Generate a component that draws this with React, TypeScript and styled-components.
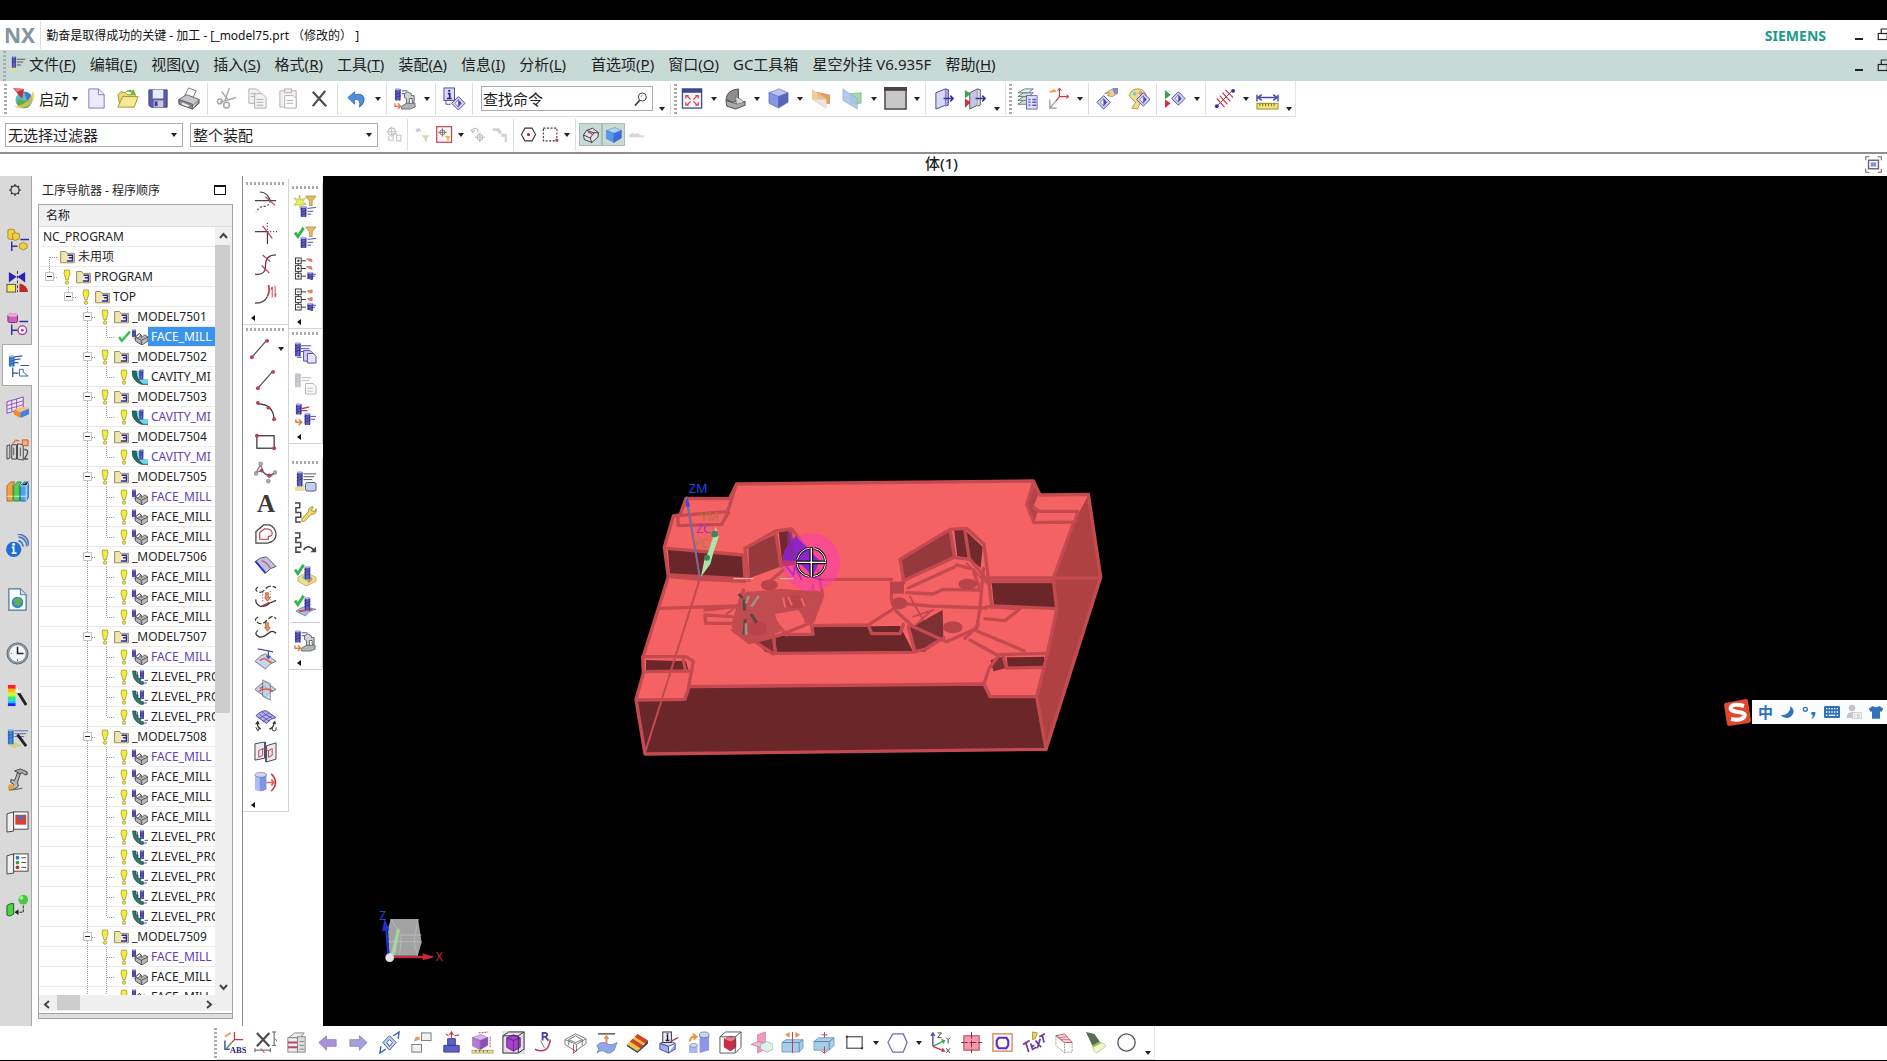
import React from "react";
import styled, { createGlobalStyle, css } from "styled-components";

const GlobalStyle = createGlobalStyle`
  * { box-sizing: border-box; }
  html, body, #root { height: 100%; }
  body {
    margin: 0;
    background: #000;
    color: #1e1e1e;
    font-family: "Noto Sans", "Noto Sans CJK SC", sans-serif;
    font-size: 12px;
    overflow: hidden;
  }
  button, input, select { font: inherit; color: inherit; margin: 0; }
  button { padding: 0; border: 0; background: none; cursor: default; }
`;

/* ---------- icon drawings, all on a 24 x 24 grid ---------- */

const P = "#4b48a8";
const R = "#c23a4c";

const Mill = ({ x = 0, y = 0, h = 12, c = "#6464c4", d = "#3a3690" }: { x?: number; y?: number; h?: number; c?: string; d?: string }) => (
  <g transform={`translate(${x} ${y})`}>
    <rect x="0" y="1" width="6" height={h} rx="1" fill={c} />
    <path d={`M0 4l6-2M0 7l6-2M0 10l6-2M1 1v${h}M5 1v${h}`} stroke={d} strokeWidth="1" fill="none" />
    <ellipse cx="3" cy="1.5" rx="3" ry="1.2" fill="#a9a9e6" />
  </g>
);
const Diamond = ({ x = 0, y = 0 }: { x?: number; y?: number }) => (
  <g transform={`translate(${x} ${y})`}>
    <path d="M7 0l7 7-7 7-7-7z" fill="#d5d5f2" stroke={P} />
    <path d="M7 3l3.5 4L7 11z" fill={P} />
    <path d="M7 3L3.500 7 7 11z" fill="#fff" stroke={P} strokeWidth=".7" />
  </g>
);
const Cube = ({ a = "#b6c4f6", b = "#8496e4", c = "#5566b8" }) => (
  <g stroke="#5a66a8" strokeWidth=".6">
    <path d="M2 6l11-4 9 4-10 4z" fill={a} />
    <path d="M2 6l10 4v12l-10-5z" fill={b} />
    <path d="M22 6l-10 4v12l10-6z" fill={c} />
  </g>
);
const Boxes = ({ sign }: { sign: "+" | "-" }) => (
  <>
    {[1, 9, 17].map((y) => (
      <g key={y} fill="none" stroke="#333">
        <rect x="1.500" y={y} width="6" height="6" fill="#fff" />
        <path d={`M3 ${y + 3}h3${sign === "+" ? `M4.500 ${y + 1.5}v3` : ""}M7.500 ${y + 3}h5`} />
        {y < 17 && <path d={`M4.500 ${y + 6}v2`} />}
      </g>
    ))}
    <path d={sign === "+" ? "M13 2l5 0 1 3-3-1zM13 10l5 0 1 3-3-1z" : "M19 2l-5 1 2 2 3 0zM19 10l-5 1 2 2 3 0z"} fill="#e89070" stroke="#b5502e" strokeWidth=".6" />
    <Mill x={14} y={15} h={7} />
    <path d="M20 18h3M20 20h2" stroke={P} />
  </>
);
const Surface = ({ y = 0 }) => (
  <g transform={`translate(0 ${y})`}>
    <path d="M1 12Q7 5 12 4l11 8q-6 1-11 8z" fill="#c9d2f0" stroke="#55606e" strokeWidth=".8" />
    <path d="M6 11q3-2 5-2l8 5" fill="none" stroke="#e0664e" strokeWidth="1.800" />
  </g>
);
const Check = () => <path d="M1 7l3 4 6-9" fill="none" stroke="#31b54a" strokeWidth="3" />;

const icons: Record<string, React.ReactNode> = {
  start: (<>
    <circle cx="13" cy="13" r="8.500" fill="#58b8d6" /><path d="M6 17q4 6 12 3l-3-6-8-2z" fill="#55b04a" /><path d="M13 5q9 0 8 9l-4 4-2-8z" fill="#3779c8" />
    <path d="M3 19Q17 19 22 4q4 9-5 15-9 4-14 0z" fill="#eac545" opacity=".8" /><path d="M2 1l11 1-2 10z" fill="#c72e36" /><path d="M2 1l11 1-7 3z" fill="#ed7b7b" />
  </>),
  menuMill: (<><path d="M1 22l5-6 6 2-3 5z" fill="#dfe08a" /><Mill x={4} y={1} h={16} /><path d="M11 6h12M11 10h9M11 14h6" stroke="#555" strokeWidth="1.500" /></>),
  newDoc: <path d="M4 2h10l6 6v14H4z M14 2v6h6" fill="#ecebfa" stroke="#7d79c4" />,
  open: (<><path d="M2 8l3-3 5 1 2 2h8v3L4 20z" fill="#e9d873" stroke="#a59430" /><path d="M2 21l5-11h16l-4 11z" fill="#f4ea96" stroke="#a59430" /><path d="M9 6q4-5 8-2l1-2 3 6-6 0 1-2q-3-2-7 0z" fill="#70b843" /></>),
  save: (<><path d="M2 3h19v18H4l-2-2z" fill="#5c5cab" stroke="#3f3f85" /><rect x="6" y="3" width="11" height="9" fill="#e6eef5" /><rect x="7" y="14" width="10" height="7" fill="#c8c8d8" /><rect x="8" y="15" width="3" height="5" fill="#3f3f85" /></>),
  print: (<><path d="M7 9l4-8 8 3-4 8z" fill="#fff" stroke="#777" /><path d="M1 13l8-5 13 5-7 7-14-4z" fill="#c8c8cc" stroke="#666" /><path d="M1 13v5l14 5v-5zM15 23l7-6v-4" fill="#8c8c94" stroke="#555" /><path d="M4 17l7 3" stroke="#eee" strokeWidth="2" /></>),
  cut: (<g fill="none" stroke="#a9a9a9" strokeWidth="1.500"><path d="M10 15L15 1M14 14L7 5M5 16l17-5" /><circle cx="5" cy="15" r="2.500" /><circle cx="12" cy="19" r="3" /></g>),
  copy: (<g fill="#f2f2f2" stroke="#b0b0b0"><path d="M3 2h8l4 4v11H3z" /><path d="M9 7h8l4 4v11H9z" /><path d="M5 7h5M5 10h4M11 13h7M11 16h7M11 19h7" /></g>),
  paste: (<g fill="#f0f0f0" stroke="#b0b0b0"><path d="M3 4h17v17H3z" /><path d="M8 2h7v4H8z" /><path d="M8 9h9l3 3v10H8z" fill="#fff" /><path d="M10 14h7M10 17h7" /></g>),
  del: <path d="M5 5l14 15M18 4L5 20" stroke="#4c4c4c" strokeWidth="2.300" fill="none" />,
  undo: (<path d="M3 11l7-6v3q10-2 10 5 0 5-5 8 2-9-5-8v5z" fill="#4d8bdc" stroke="#2c5fb0" strokeWidth=".8" />),
  post: (<>
    <Mill x={1} y={1} h={12} /><path d="M8 4h6M8 7h4" stroke={P} />
    <path d="M11 11V7l3-2 4 2v2h3v7h-2v-4h-3v7h-3v-7z" fill="#d2d5d8" stroke="#555" strokeWidth=".9" />
    <path d="M8 20l5-3h9v4l-5 2H8z" fill="#aeb4b8" stroke="#555" strokeWidth=".8" />
    <path d="M1 17v3h6M4 17l3 3-3 3" fill="none" stroke="#dd8352" strokeWidth="1.500" />
  </>),
  infoObj: (<><rect x="1" y="1" width="11" height="13" fill="#dcdcf4" stroke={P} /><path d="M5 7h2v5M4 12h5" stroke="#29267c" strokeWidth="1.800" fill="none" /><rect x="5.500" y="3" width="2" height="2" fill="#29267c" /><path d="M3 14v4h5" fill="none" stroke="#555" /><Diamond x={9} y={10} /></>),
  fit: (<><rect x="1.500" y="2" width="20" height="20" fill="#f3f3fb" stroke="#45528e" strokeWidth="1.400" /><rect x="1" y="2" width="21" height="4" fill="#39498a" /><path d="M6 9l4 4M17 9l-4 4M6 19l4-4M17 19l-4-4" stroke="#cf4b45" strokeWidth="1.300" /><path d="M5 12V9h3M18 12V9h-3M5 16v3h3M18 16v3h-3" fill="none" stroke="#cf4b45" strokeWidth="1.300" /></>),
  orient: (<><path d="M2 13Q3 3 15 2v12l-6 2z" fill="#8d8d8d" stroke="#4b4b4b" /><path d="M2 14l9 3 11-2v4l-10 4-9-3z" fill="#a9a9a9" stroke="#4b4b4b" /><path d="M12 10l6 3 3 3-8 2z" fill="#d6d6d6" stroke="#555" strokeWidth=".6" /></>),
  cube: <Cube />,
  clipEdit: (<><path d="M7 5l14 3v10l-13-2z" fill="#dd9e5b" /><path d="M2 2l15 10v11L2 13z" fill="#edc695" opacity=".85" /><path d="M4 13l13 10V13" fill="#e9e4de" /></>),
  clipPlane: (<><path d="M9 7l12-1v11H10z" fill="#a3dba9" stroke="#6da06f" strokeWidth=".6" /><path d="M2 2l15 10v11L2 14z" fill="#a9c6e8" stroke="#8793b5" strokeWidth=".6" opacity=".9" /></>),
  bg: (<><rect x="1" y="1" width="22" height="22" fill="#c8c8c8" stroke="#444" strokeWidth="1.500" /><rect width="24" height="4" fill="#444" /></>),
  section: (<><path d="M3 6l10-4v17L3 23z" fill="#d8d8f3" stroke={P} /><path d="M13 2l3 1v16l-3 1" fill="#aaa9da" stroke={P} /><path d="M11 12h10M18 9l3 3-3 3" fill="none" stroke="#33309c" strokeWidth="1.600" /></>),
  section2: (<><path d="M1 3l6 4-6 5z" fill="#3da34b" /><path d="M1 12l6 4-6 6z" fill="#cc3448" /><path d="M6 6l8-4v17l-8 4z" fill="#c6c6e4" stroke="#555" /><path d="M14 2l3 1v16l-3 1" fill="#e3e3ef" stroke="#555" /><path d="M12 12h10M19 9l3 3-3 3" fill="none" stroke="#33309c" strokeWidth="1.600" /></>),
  layers: (<g stroke="#55716d" strokeWidth=".9"><path d="M2 18l6-4 10 0-5 4z" fill="#d5e4e2" /><path d="M2 14l6-4h10l-5 4z" fill="#d5e4e2" /><path d="M2 10l6-4h10l-5 4z" fill="#d5e4e2" /><path d="M2 6l7-4h9l-5 4z" fill="#e9f1f0" /><rect x="11" y="9" width="11" height="14" fill="#dfdff8" stroke="#5f5cb4" /><path d="M13 13h2M17 13h4M13 16h2M17 16h4M13 19h2M17 19h4" stroke="#5f5cb4" strokeWidth="1.500" /></g>),
  wcs: (<g fill="none"><path d="M13 2v8h9M13 10l-4 5" stroke={R} strokeWidth="1.300" /><path d="M20 8l3 2-3 2M11 4l2-3 2 3" stroke={R} /><path d="M2 5l6-3 2 3-7 1z" fill="#e79a60" /><path d="M3 13v9h7M3 22l6-7" stroke="#999" strokeWidth="1.300" /></g>),
  showHide: (<><Diamond x={1} y={9} /><path d="M9 7l6-4 5-1 2 5-5 3-5-1 2-3z" fill="#f3cd97" stroke="#8e7545" strokeWidth=".7" /><path d="M17 1l6 0v6h-4z" fill="#7f8cc8" /></>),
  palette: (<><path d="M2 9Q5 1 13 2q8 2 7 10l-6 4-3 7-6-1 4-6z" fill="#f0df87" stroke="#9a8440" strokeWidth=".8" /><circle cx="8" cy="7" r="2" fill="#82c6dd" /><circle cx="14" cy="6" r="2" fill="#d99" /><Diamond x={10} y={6} /></>),
  replay: (<><path d="M1 3l6 5-6 5z" fill="#3da34b" /><path d="M1 13l6 4-6 5z" fill="#cc3448" /><Diamond x={8} y={5} /></>),
  measure: (<g fill="none"><path d="M4 20L20 4" stroke="#555" /><path d="M4 12l8 9M7 9l8 9M10 6l8 9M13 3l8 8" stroke={R} strokeWidth="1.200" /><circle cx="4" cy="20" r="2" fill="#33309c" /><circle cx="21" cy="4" r="2" fill="#33309c" /></g>),
  ruler: (<><path d="M1 8v7M23 8v7M2 11h20M6 8l-4 3 4 3M18 8l4 3-4 3" fill="none" stroke={P} strokeWidth="1.500" /><rect x="1" y="17" width="22" height="6" fill="#efe57a" stroke="#978b31" /><path d="M4 17v3M7 17v3M10 17v3M13 17v3M16 17v3M19 17v3" stroke="#756a1f" /></>),
  search: (<g fill="none" stroke="#444" strokeWidth="1.500"><circle cx="14" cy="9" r="6" /><path d="M10 14l-7 8" strokeWidth="2.500" /><path d="M12 9l2-3" strokeWidth="1" /></g>),
  /* selection bar */
  f1: (<g fill="none" stroke="#c3c3c3" strokeWidth="1.500"><circle cx="8" cy="8" r="5" /><path d="M8 1v14M1 8h14M4 14v6h6v-9h5v11M15 13h6v8h-6" /></g>),
  f2: (<g fill="#ccc"><path d="M2 4l6-1 3 5-3-1-4 2z" /><path d="M11 13h11l-4 5v4h-3v-4z" fill="#d9d6b0" /></g>),
  f3: (<><rect x="1" y="1" width="21" height="22" fill="#fdf4f4" stroke={R} strokeWidth="1.600" /><circle cx="9" cy="9" r="3.500" fill="none" stroke="#555" /><path d="M9 3v12M3 9h12" stroke="#555" /><path d="M12 14h9l-3 4v4h-2v-4z" fill="#e9bf45" /></>),
  f4: (<g fill="none" stroke="#bbb" strokeWidth="1.500"><circle cx="14" cy="16" r="4" /><path d="M14 9v14M7 16h14M3 6q3-5 8-1v4M1 5l3 4 3-3" /></g>),
  f5: (<g fill="#d2d2d2"><path d="M1 3h9l4 5-3 4-4-5-6 0z" /><path d="M13 11h8v12h-3v-8h-5z" /></g>),
  hexDot: (<g fill="none" stroke="#333" strokeWidth="1.500"><path d="M7 3h10l5 9-5 9H7l-5-9z" /><circle cx="12" cy="12" r="1.500" fill="#b22" stroke="#b22" /></g>),
  marquee: (<><rect x="2" y="3" width="19" height="18" fill="none" stroke="#444" strokeWidth="1.600" strokeDasharray="3 2" /><path d="M19 18h4v4h-4z" fill={R} /></>),
  shadeA: (<g stroke="#333" strokeWidth="1.200"><path d="M2 12l4-6 8-3 8 6-1 6-8 7-10-4z" fill="#e3e3ea" /><path d="M2 12l9 4 2 6M11 16l5-7 6 0M6 6l10 3" fill="none" /><path d="M8 8l6 3" stroke={R} strokeWidth="1.600" /></g>),
  shadeB: <Cube a="#a9d3fb" b="#4e9bf0" c="#386fd8" />,
  shadeC: <path d="M2 12l5-3 2 3 5-2 3 3 5 0v3H2z" fill="#d7d7d7" />,
  /* curve column */
  trim: (<g fill="none" stroke="#444" strokeWidth="1.200"><path d="M1 10h22M6 1q8 0 11 9" /><path d="M17 10q-1 6-7 6-4 0-8 6" strokeDasharray="2 2" /><path d="M12 6l10 9" stroke={R} /></g>),
  corner: (<g fill="none" stroke="#444" strokeWidth="1.300"><path d="M1 10h13v13" /><path d="M14 1v9h10" strokeDasharray="1 2" /><path d="M9 4l10 13" stroke={R} /></g>),
  bridge: (<g fill="none" stroke="#444" strokeWidth="1.300"><path d="M1 22q11 2 11-9 0-11 11-11" /><path d="M9 2l8 7M8 13l8 8" stroke={R} /></g>),
  extend: (<g fill="none" strokeWidth="1.300"><path d="M1 20q10 0 13-7" stroke="#444" /><path d="M14 13q3-6 1-12" stroke={R} strokeWidth="1.800" /><path d="M19 14V3M19 3l-1 3M22 2v11M22 14l1-4" stroke={R} strokeWidth="1" /></g>),
  line: (<><path d="M5 20L19 4" stroke="#555" strokeWidth="1.300" /><circle cx="4" cy="21" r="2" fill={R} /><circle cx="20" cy="4" r="2" fill={R} /></>),
  arc: (<><path d="M4 5q16 0 17 16" fill="none" stroke="#333" strokeWidth="1.300" /><g fill={R}><circle cx="4" cy="4" r="2" /><circle cx="15" cy="9" r="2" /><circle cx="21" cy="21" r="2" /></g></>),
  rect: (<><rect x="3" y="6" width="18" height="13" fill="none" stroke="#333" strokeWidth="1.300" /><circle cx="3" cy="6" r="2" fill={R} /><circle cx="21" cy="19" r="2" fill={R} /></>),
  spline: (<><path d="M2 13L7 3l2 8 7 6 6-5" fill="none" stroke="#888" strokeWidth="1.600" /><path d="M2 13q6-5 8-1t12 1" fill="none" stroke="#444" /><g fill="#aaa" stroke="#777" strokeWidth=".6"><circle cx="7" cy="3" r="2" /><circle cx="2" cy="13" r="2" /><circle cx="22" cy="12" r="2" /><circle cx="15" cy="21" r="2" /></g><g fill={R}><circle cx="8" cy="10" r="2" /><circle cx="16" cy="15" r="2" /></g></>),
  offset: (<g fill="none"><path d="M2 21V9l8-7h6q7 3 7 10t-9 9z" stroke="#444" strokeWidth="1.300" /><path d="M6 17v-7l5-4q8 0 8 5 0 3-4 3v3z" stroke={R} strokeWidth="1.200" /></g>),
  surfCurve: (<><path d="M1 8q6-5 12-5l10 10q-6 1-11 7z" fill="#b9c4ee" stroke="#555" /><path d="M2 8l10 12" stroke="#3333c5" strokeWidth="2" /><path d="M8 7q5 1 9 8" fill="none" stroke="#e05a50" strokeWidth="1.500" /></>),
  project: (<g fill="none" stroke="#333" strokeWidth="1.300"><path d="M4 2q-4 3 0 5t8-3 11-1" strokeDasharray="6 2" /><path d="M9 7v10M17 6v10" stroke="#b23ab2" strokeDasharray="1 2" /><path d="M12 8h3v5h2l-3 4-3-4h1z" fill="#ee9060" stroke="#b45020" strokeWidth=".7" /><path d="M2 15q-1 4 4 7 6 1 10-3l7-3" /><path d="M8 22l8-4" stroke={R} /></g>),
  combine: (<g fill="none" stroke="#333" strokeWidth="1.300"><path d="M4 1q-5 3 0 6t10-3 9-1" strokeDasharray="5 2" /><path d="M12 7h3v5h2l-3 4-3-4h1z" fill="#ee9060" stroke="#b45020" strokeWidth=".7" /><path d="M4 15q-5 4 2 7 5 0 9-4t8 0" /></g>),
  surfLine: (<><Surface y={3} /><path d="M4 2l16 3M15 4v8M13 9l2 3 2-3" stroke="#4052b0" fill="none" strokeWidth="1.300" /></>),
  surfInt: (<><Surface y={0} /><path d="M9 2l8 4v17l-8-4z" fill="#bfd3e6" stroke="#53617a" opacity=".7" /><path d="M5 14q6-5 15 0" fill="none" stroke="#e05a50" strokeWidth="1.500" /></>),
  uv: (<><path d="M2 7q6-6 11-5l10 7q-5 0-10 6z" fill="#b6b0ee" stroke={P} /><path d="M5 5l11 8M8 3l11 7M5 10l11-6M9 13l10-6" stroke={P} strokeWidth=".8" /><path d="M7 21q-4-2-3-7M16 21q4-1 5-6" fill="none" stroke="#333" strokeWidth="1.300" /><path d="M1 16l3-4 2 4zM19 15l3-3 1 4z" fill="#333" /><path d="M2 19l2 4 2-4M19 19v3q2 2 4 0v-3" fill="none" stroke="#333" /></>),
  mirror: (<g fill="#ececf0" stroke="#444"><path d="M1 4l10-2v17L1 21z" /><path d="M13 6l10-3v17l-10 3z" /><g fill="none" stroke={R}><path d="M5 11l4-2v7l-4 2zM9 9l3 1M15 11l4-2v7l-4 2zM12 10l3 1" /></g><path d="M12 2v21" stroke={P} /></g>),
  extrude: (<><path d="M1 4h12v15q-6 4-12 0z" fill="#7f94e6" /><path d="M1 4h5v17q-4-1-5-2z" fill="#aebcf5" /><ellipse cx="7" cy="4" rx="6" ry="2.500" fill="#cdd6fa" stroke="#667" strokeWidth=".6" /><path d="M13 12h8M18 9l3 3-3 3" fill="none" stroke="#e0664e" strokeWidth="1.800" /><path d="M18 3q9 9 0 18" fill="none" stroke={R} strokeWidth="1.600" /></>),
  /* machining column */
  createProg: (<><path d="M6 0l1 5 5-2-3 4 4 3-5 0-1 5-2-5-5 1 3-4-3-4 5 2z" fill="#e6ef58" stroke="#a0a83a" strokeWidth=".6" /><path d="M12 1h11l-4 5v5h-3V6z" fill="#e3bb5b" stroke="#9b7828" strokeWidth=".6" /><Mill x={7} y={11} h={11} /><path d="M14 14l9-1M14 17l6 0M14 20h4" stroke={P} /></>),
  verifyProg: (<><Check /><path d="M12 1h11l-4 5v5h-3V6z" fill="#e3bb5b" stroke="#9b7828" strokeWidth=".6" /><Mill x={7} y={11} h={11} /><path d="M14 14l9-1M14 17l6 0M14 20h4" stroke={P} /></>),
  expandAll: <Boxes sign="+" />,
  collapseAll: <Boxes sign="-" />,
  opCopy: (<><Mill x={1} y={1} h={14} /><path d="M7 5h11M7 8h9M7 11h5M3 17l5 0" stroke={P} /><path d="M10 10h7l3 3v8h-10z" fill="#d3d3f3" stroke={P} /><path d="M14 13h6l3 3v7h-9z" fill="#e6e6fb" stroke={P} /></>),
  opPaste: (<g opacity=".7"><Mill x={1} y={1} h={14} c="#c2c2c2" d="#9b9b9b" /><path d="M8 6h10M8 9h8" stroke="#999" /><path d="M12 12h8l3 3v8H12z" fill="#f7f7f7" stroke="#999" /><path d="M14 17h6M14 20h6" stroke="#aaa" /></g>),
  opMove: (<><Mill x={2} y={0} h={11} /><path d="M8 6l8-2M8 8l6 0" stroke={R} strokeWidth="1.400" /><Mill x={11} y={10} h={12} /><path d="M17 14h6M17 17h5" stroke={P} /><path d="M2 17v3h6M5 17l3 3-3 3" fill="none" stroke="#dd7a45" strokeWidth="1.500" /></>),
  opShow: (<><path d="M1 18l5-3h5v7H1z" fill="#e8dfa0" /><Mill x={3} y={1} h={15} /><path d="M10 4h13M10 7h11M10 10h9" stroke="#555" /><rect x="12" y="13" width="11" height="9" rx="2" fill="#bed0ee" stroke="#4b5c79" /></>),
  genPath: (<><path d="M1 2h5v5H2v5h5v5H2v5h5" fill="none" stroke="#444" strokeWidth="1.500" /><path d="M8 19l7-8q0-5 5-5l-2 4 4 1 1-3q1 6-5 6l-7 7q-4 1-3-2z" fill="#f0da6c" stroke="#8e7c26" strokeWidth=".8" /></>),
  replayPath: (<g fill="none" stroke="#444" strokeWidth="1.600"><path d="M1 1h5v5H2v5h5v5H2v5h5" /><path d="M10 19q4-7 11 0" /><path d="M23 15v6h-6z" fill="#444" stroke="none" /></g>),
  verify3d: (<><Check /><path d="M4 15l9-5 10 5v4l-10 5-9-5z" fill="#eddf8d" stroke="#a18f3a" strokeWidth=".6" /><path d="M8 15l5-3 6 3-5 4z" fill="#66c69c" /><path d="M14 19l5-4v3l-4 3z" fill="#eb7c60" /><Mill x={11} y={3} h={13} /></>),
  verifyCut: (<><Check /><path d="M2 18q7-6 12-4l9 2q-7 1-11 7z" fill="#a8baf0" stroke="#556aa0" strokeWidth=".7" /><path d="M5 18l14-2" stroke="#dd4a3c" strokeWidth="2" /><Mill x={11} y={3} h={13} /></>),
  /* resource bar */
  gear: (<g fill="none" stroke="#333" strokeWidth="1.600"><circle cx="12" cy="12" r="5.500" /><path d="M12 4v3M12 17v3M4 12h3M17 12h3M6.500 6.500l2 2M15.500 15.500l2 2M6.500 17.500l2-2M15.500 8.500l2-2" /></g>),
  asm: (<><g fill="#f1cf45" stroke="#9e7b13" strokeWidth=".8"><path d="M2 2l3-1 4 1v9l-4 1-3-1z" /><path d="M7 6l3-1 4 1v5l-4 2-3-1z" /><path d="M14 17l4-2 4 2v4l-4 2-4-2z" /></g><path d="M15 12h9M6 14v10M6 19h6" stroke="#35309a" strokeWidth="1.500" /></>),
  constraint: (<><path d="M3 2l8 5-8 6zM20 2l-8 5 8 6z" fill="#2a1fc0" /><path d="M12 1v22" stroke="#333" strokeDasharray="3 2" /><rect x="1" y="15" width="9" height="8" fill="#f7ea49" stroke="#555" /><path d="M14 14q8 1 9 9h-9z" fill="#c02828" /></>),
  part: (<><rect x="2" y="2" width="10" height="9" rx="2" fill="#ca62b8" stroke="#7d2673" /><ellipse cx="7" cy="3" rx="5" ry="2" fill="#eaa8df" /><path d="M14 10h9M6 13v11M6 19h6" stroke="#35309a" strokeWidth="1.500" /><circle cx="17" cy="19" r="4.500" fill="#fff" stroke="#ad3d9c" strokeWidth="1.500" /><circle cx="17" cy="19" r="1.500" fill="#ad3d9c" /></>),
  opNav: (<><Mill x={2} y={1} h={11} c="#4a8fe0" d="#2361b4" /><path d="M8 3l8-1M8 6l6-1M8 9h4M14 12h9M6 14v10M6 20h6" stroke="#35529a" strokeWidth="1.300" /><path d="M13 16h4v3l5 4h-9z" fill="#fff" stroke="#3c66ab" /></>),
  mfg: (<><path d="M1 6l17-5v12L1 18z" fill="#efe7f4" stroke="#7d4cc0" /><path d="M1 10l17-5M1 14l17-5M6 4v12M11 3v12" stroke="#8c5acb" /><path d="M8 14l9-3 7 2-9 4z" fill="#f7bd7c" /><path d="M8 14v5l7 4v-6z" fill="#f08a2a" /><path d="M15 17l9-4v6l-9 4z" fill="#4a7de0" /></>),
  machine: (<><path d="M1 8l3-1v14l-3 1zM6 7h5v15H6zM12 6l6 1v16l-6-1z" fill="#d5d5d5" stroke="#444" /><path d="M8 10v8M15 10v9" stroke="#555" /><path d="M7 6l3-4 4 1M17 2h6v6h-6z" fill="#f3b07c" stroke="#d6501d" /><path d="M19 12q5 0 3 5l-3 5h4" fill="none" stroke="#555" strokeWidth="1.500" /></>),
  books: (<g strokeWidth=".8"><path d="M1 6l4-4h4l-2 4v16H1z" fill="#f4a13f" stroke="#a8551c" /><path d="M8 6l4-4h4l-2 4v16H8z" fill="#4fd057" stroke="#1d7d28" /><path d="M15 6l4-4h5v15l-3 5h-6z" fill="#49a3e4" stroke="#1a5a92" /><path d="M21 6v16M15 6h6l3-4M1 17h6M8 17h6M15 17h6" stroke="#fff" /></g>),
  info: (<><circle cx="8" cy="16" r="8" fill="#1d70d4" /><circle cx="8" cy="11" r="1.500" fill="#fff" /><path d="M6 14h2v6M6 20h5" stroke="#fff" strokeWidth="1.800" fill="none" /><path d="M13 7q4 1 5 6M13 3q8 1 9 10M12 0q11 1 12 12" fill="none" stroke="#4c7dc4" strokeWidth="1.800" /></>),
  page: (<><path d="M3 1h12l6 6v16H3z" fill="#fff" stroke="#4477a8" strokeWidth="1.300" /><path d="M15 1v6h6" fill="#cfe0ef" stroke="#4477a8" /><circle cx="12" cy="15" r="6" fill="#3e86bf" /><path d="M8 12l5-2 4 4-4 5-4-2z" fill="#57b356" /></>),
  clock: (<><circle cx="12" cy="12" r="11" fill="#8d99a5" stroke="#5b6670" /><circle cx="12" cy="12" r="8.500" fill="#f5f8fb" /><path d="M12 5v7h6" fill="none" stroke="#222" strokeWidth="1.600" /><path d="M5 12h1M12 18v2M18 12h1" stroke="#666" /></>),
  spectrum: (<><rect x="2" y="1" width="8" height="4" fill="#f22" /><rect x="2" y="5" width="8" height="4" fill="#fb1" /><rect x="2" y="9" width="8" height="4" fill="#cf2" /><rect x="2" y="13" width="8" height="4" fill="#2e8" /><rect x="2" y="17" width="8" height="3" fill="#1cf" /><rect x="2" y="20" width="8" height="3" fill="#22f" /><path d="M13 9l8 13" stroke="#222" strokeWidth="3" /><path d="M12 4l1 3 3 0-2 3-3-2-2 0z" fill="#fff" /></>),
  toolWiz: (<><path d="M1 20l8-3 8 3-8 3z" fill="#cdcf8c" /><Mill x={2} y={3} h={15} c="#4a8fe0" d="#2361b4" /><path d="M9 5h14M9 8h12M9 11h10" stroke="#5b6da8" /><path d="M12 9l9 12" stroke="#222" strokeWidth="3" /></>),
  wrench: (<>
    <path d="M9 3l6-2 7 3v3h-3l-2-2-3 1z" fill="#aaa" stroke="#444" />
    <path d="M12 5l-3 8-4-1 0 3 3 2-3 4 4 1 4-3-1-4 3-9z" fill="#b5b5b5" stroke="#444" />
    <circle cx="5" cy="20" r="3" fill="#e9a23d" /><path d="M3 23q7 0 14-2" stroke="#555" fill="none" />
  </>),
  panelA: (<><path d="M1 4l7-2v20l-7 1z" fill="#eee" stroke="#444" /><rect x="8" y="2" width="15" height="18" fill="#fff" stroke="#444" /><rect x="10" y="5" width="11" height="10" fill="#3f73c8" /><path d="M10 15V5h3v5h5V5h3v10z" fill="#dd4030" /></>),
  panelB: (<><path d="M1 4l7-2v20l-7 1z" fill="#eee" stroke="#444" /><rect x="8" y="2" width="15" height="18" fill="#fff" stroke="#444" /><circle cx="12" cy="6" r="2" fill="#3a74cc" /><circle cx="12" cy="11" r="2" fill="#36a244" /><circle cx="12" cy="16" r="2" fill="#cc2c2c" /><path d="M16 6h5M16 11h5M16 16h5" stroke="#444" /></>),
  roles: (<><path d="M1 12l4-2 3 0v11l-4 2-3-1z" fill="#4dd24a" stroke="#16601a" /><circle cx="18" cy="6" r="5" fill="#45c93d" /><circle cx="16" cy="4" r="2" fill="#a8f0a0" /><path d="M18 12v7h-8" fill="none" stroke="#222" strokeDasharray="3 1" /><path d="M9 19l4-3v6z" fill="#222" /></>),
  /* bottom bar */
  abs: (<><path d="M12 1v8h9M12 9l-3 3" fill="none" stroke={R} strokeWidth="1.400" /><path d="M2 6l6-4" stroke="#e9a060" strokeWidth="2" /><path d="M2 10v9h5" fill="none" stroke={P} strokeWidth="1.500" /><path d="M3 19l6-7" stroke="#3da34b" strokeWidth="1.500" /><text x="7" y="23" fontFamily="Liberation Serif, serif" fontWeight="700" fontSize="9" fill="#29267c">ABS</text></>),
  xdim: (<g fill="none"><path d="M3 2l13 14M16 2L3 16" stroke="#4c4c4c" strokeWidth="2.200" /><path d="M1 20h16M1 18v4M17 18v4M19 1h4M19 15h4M21 1v14" stroke="#555" /><path d="M7 18l4 5M22 8l2 3" stroke={R} /></g>),
  stack: (<g stroke="#888" fill="#ededed"><path d="M4 7l6-5h10l-4 5z" /><rect x="3" y="7" width="10" height="15" /><rect x="13" y="6" width="8" height="16" fill="#ddd" /><path d="M3 12h10M3 17h10" stroke="#b54a72" strokeWidth="2" /><path d="M15 11h5M15 15h5M15 19h5" /></g>),
  left: <path d="M3 12l8-7v4h10v7H11v4z" fill="#a893d8" stroke="#8873bb" strokeWidth=".8" />,
  right: <path d="M21 12l-8-7v4H3v7h10v4z" fill="#a3a0dc" stroke="#7f7cc0" strokeWidth=".8" />,
  diamondArrows: (<><path d="M12 5l7 7-7 8-7-8z" fill="#c3cff0" stroke="#445c9a" /><path d="M12 9l3 3-3 4-3-4z" fill="#fff" stroke="#445c9a" /><path d="M16 5l6-4-1 7M8 19l-6 4 1-7" fill="none" stroke="#3c6cb0" strokeWidth="1.500" /></>),
  blocks: (<g fill="#f1f1f1" stroke="#777"><rect x="13" y="2" width="10" height="8" /><rect x="3" y="14" width="10" height="8" /><path d="M5 11l2-5 4 0 0 3z" fill="#e79a60" stroke="none" /></g>),
  pad: (<><path d="M4 15h16v7H4zM8 8h8v7H8z" fill="#5e61c4" stroke="#3a3c94" /><path d="M12 8V1M10 4l2-3 2 3M9 5l-3-2M15 5l5-1" fill="none" stroke={R} strokeWidth="1.200" /></>),
  cubeRuler: (<><g transform="translate(0 2) scale(.8)"><Cube a="#dcb2ec" b="#b57ad6" c="#8d4cb6" /></g><path d="M20 6v12M8 2l10-1" stroke={R} strokeDasharray="2 1" /><rect x="1" y="20" width="22" height="3" fill="#efe0a0" stroke="#a8914a" strokeWidth=".7" /><path d="M5 20v2M9 20v2M13 20v2M17 20v2" stroke="#665" /></>),
  cubeWire: (<><rect x="0" y="0" width="24" height="24" fill="#e2dfe6" /><path d="M5 7l7-3 7 3v10l-7 4-7-4z" fill="#a544cc" stroke="#6c1f90" /><path d="M12 10v11M5 7l7 3 7-3" fill="none" stroke="#6c1f90" /><path d="M1 5h16v18H1zM1 5l6-4h16l-6 4M23 1v18l-6 4" fill="none" stroke="#333" /></>),
  radius: (<g fill="none" strokeWidth="1.600"><path d="M10 10V2h3q4 2 0 4h-3M13 6l3 4" stroke={P} strokeWidth="2" /><path d="M2 19q14 6 16-10" stroke={R} /><path d="M8 10l4 8" stroke="#777" strokeWidth="1" /></g>),
  wirePocket: (<g fill="none" stroke="#777"><path d="M1 9l11-6 11 5-10 6zM1 9v5l11 7 11-8V8" /><path d="M5 9l7-4 7 4-7 3zM13 14v7M5 9v6M19 9v6" /><path d="M10 14v9l4-3" stroke={R} /></g>),
  patch: (<><path d="M3 3h18" stroke="#555" strokeWidth="1.500" /><path d="M12 4l3 4h-2v5h-2V8H9z" fill="#ea8a50" /><path d="M2 15q5-5 10-2t11-1l-3 8q-5 5-9 2t-9 1l2-4z" fill="#91a6e8" stroke="#5670b8" strokeWidth=".7" /></>),
  stripes: (<><path d="M1 14L12 3l11 7-11 11z" fill="#e9c83b" /><path d="M4 11l3-3 11 7-3 3zM9 6l3-3 11 7-3 3z" fill="#d44131" /><path d="M1 14l11 7 11-11v3L12 23 1 16z" fill="#444" /></>),
  infoCube: (<><path d="M3 13l8-4 8 4-7 3z" fill="#cfdaf6" stroke={P} /><path d="M3 13v6l9 4v-7zM12 23l7-4v-6" fill="#9cb0ea" stroke={P} /><rect x="6" y="1" width="9" height="11" fill="#e9e9fb" stroke="#333" /><path d="M10 5h1v5M9 10h4M10 3h2" stroke="#222" strokeWidth="1.500" fill="none" /><path d="M14 11l8-4" stroke={R} strokeWidth="1.500" /></>),
  cyls: (<><path d="M12 4l10-1v17l-10 3z" fill="#8b95ea" /><ellipse cx="17" cy="4" rx="5" ry="3" fill="#cdd3fa" stroke="#667" strokeWidth=".7" /><path d="M1 15h9v8H1z" fill="#a9b4f2" /><ellipse cx="6" cy="15" rx="4" ry="2" fill="#d7dcfb" stroke="#667" strokeWidth=".6" /><path d="M2 11q0-5 5-5M5 3l4 3-3 3" fill="none" stroke="#e59345" strokeWidth="2" /></>),
  redCube: (<><path d="M5 8l7-3 6 3v9l-6 4-7-4z" fill="#c82c46" /><path d="M5 8l7-3 6 3-6 3z" fill="#f07b88" /><path d="M1 6h16v17H1zM1 6l6-5h16l-6 5M23 1v16l-6 6" fill="none" stroke="#555" /></>),
  pinkPlane: (<><path d="M8 4l8-3v18l-8 4z" fill="#ef9cc2" stroke="#c8679b" strokeWidth=".7" /><path d="M1 14l8-3 7 2-6 4z" fill="#f3b5d0" stroke="#b7708f" strokeWidth=".7" /><path d="M11 14l7-3 6 3v5l-6 3-7-3z" fill="#e5efe9" stroke="#8ba" strokeWidth=".8" /></>),
  splitH: (<><path d="M1 12l4-3h18v9l-4 4H1z" fill="#a8cdea" stroke="#5c88aa" strokeWidth=".7" /><path d="M1 12h18v10M19 12l4-3" fill="none" stroke="#5c88aa" /><path d="M12 1v22" stroke={R} /><path d="M4 4l5-3v6zM20 4l-5-3v6z" fill="#e5934f" /></>),
  splitV: (<><path d="M2 11l5-4h16v8l-5 5H2z" fill="#a8cdea" stroke="#5c88aa" strokeWidth=".7" /><path d="M2 11h16v9M18 11l5-4" fill="none" stroke="#5c88aa" /><path d="M13 1v6M13 16v7M10 4h6M10 21l3 2 3-2" stroke={R} fill="none" /></>),
  rect2: (<><rect x="4" y="6" width="16" height="12" fill="none" stroke="#555" strokeWidth="1.300" /><path d="M3 5h2v2H3zM19 17h2v2h-2z" fill="#333" /></>),
  hex: <path d="M7 3h11l4 9-4 10H7l-5-10z" fill="none" stroke="#6c70ac" strokeWidth="1.300" strokeLinejoin="round" />,
  csys: (<g fill="none" strokeWidth="1.400"><path d="M4 16V2M2 5l2-3 2 3" stroke={P} /><path d="M4 16l12-6M13 9l3 1-1 3" stroke="#3da34b" /><path d="M4 16l12 5M13 21l3 0-2-3" stroke={R} /><path d="M9 2h4l-4 5h4M18 7l2 2 2-2M20 9v4M18 18l4 5M22 18l-4 5" stroke="#444" strokeWidth="1" /></g>),
  target: (<><rect x="4" y="5" width="16" height="15" fill="#ed9cad" stroke={R} /><path d="M12 1v22M1 12h22" stroke="#a22036" strokeDasharray="7 2" /></>),
  ring: (<><rect x="2" y="3" width="20" height="18" fill="#fff" stroke="#d98350" strokeWidth="1.400" /><path d="M8 7h8l2 3v5l-2 3H8l-2-3v-5z" fill="none" stroke="#572bc2" strokeWidth="2.200" /></>),
  text3d: (<g fill="none"><path d="M1 14l7-4M4 12l3 10M9 13l2 6 4-2M10 16l3-1M14 10l6 7M19 8l-3 10M18 6l6-3M21 4l2 8" stroke="#69408f" strokeWidth="1.800" /><path d="M11 1l5 1-2 6-3 1z" fill="#ecd94b" stroke="#8a7a20" strokeWidth=".7" /></g>),
  cubeDash: (<g fill="none" stroke="#999"><path d="M3 5v10l9 8V12zM12 12h8v10h-8" strokeDasharray="2 1" /><path d="M3 5l9-2 8 9h-8z" fill="#f6d5da" stroke={R} strokeWidth=".8" /><path d="M5 7l10-1M8 9h10" stroke={R} strokeWidth=".6" /></g>),
  light: (<><path d="M2 1l9 2 6 9-8 4z" fill="#5d6958" /><path d="M9 16q0 5 4 7l10-7q-1-4-6-4z" fill="#f4f4cf" stroke="#b3b380" strokeWidth=".7" /><path d="M9 16l8-4" stroke="#8bc34a" strokeWidth="2.500" /></>),
  circle: <circle cx="12" cy="12" r="9" fill="none" stroke="#555" strokeWidth="1.400" />,
  fullScreen: (<g fill="none" stroke="#667"><path d="M1 6V1h5M18 1h5v5M23 18v5h-5M6 23H1v-5" strokeWidth="1.500" /><rect x="5" y="6" width="14" height="12" fill="#fff" strokeWidth="2" /><rect x="8" y="9" width="8" height="6" fill="#7d9bd0" stroke="none" /></g>),
  restore: (<g fill="none" stroke="#222" strokeWidth="1.600"><path d="M7 10V4h13v9h-4" /><rect x="3" y="10" width="12" height="8" /></g>),
  /* tree */
  bang: (<g fill="#f4ee3a" stroke="#8c8530"><path d="M8.500 1.500h7l1 5-3 10h-3l-3-10z" /><circle cx="12" cy="20.500" r="2.500" /></g>),
  tick: <path d="M2 13l5 7L22 3" fill="none" stroke="#35c24f" strokeWidth="4.500" />,
  folder: (<><path d="M1 4h8l2 3h12v15H1z" fill="#f0e7ac" stroke="#8f8858" strokeWidth="1.500" /><rect x="11" y="9" width="11" height="12" fill="#f7f3da" /><path d="M12 10h8v4h-6M20 14v5h-9" fill="none" stroke="#2c2590" strokeWidth="2.400" /></>),
  face: (<>
    <Mill x={0} y={0} h={11} /><path d="M2 13l7 7" stroke={P} strokeWidth="1.500" strokeDasharray="2 1" />
    <g stroke="#3f3f3f" strokeWidth="1.200" strokeLinejoin="round">
      <path d="M5 12l6-5 3 2v4l5-4 5 3v6l-9 6-10-6z" fill="#b9b9b9" />
      <path d="M5 12l9 5 10-5M14 17v7" fill="none" /><path d="M5 12l6-5 3 2-5 5z" fill="#e6e6e6" />
    </g>
  </>),
  cavity: (<><path d="M0 3h7q0 13 9 19h8v1H14Q0 18 0 3z" fill="#256b60" stroke="#12382f" /><path d="M7 3h8v12h9v7h-7Q7 16 7 3z" fill="#65dced" /><Mill x={11} y={0} h={15} /></>),
  zlevel: (<><path d="M1 3h5v6h3v5h4v5h4v4h-4Q1 18 1 3z" fill="#2c7d6c" stroke="#12382f" /><Mill x={12} y={1} h={13} /><path d="M8 4v8M19 17h5M16 21h6" stroke={P} strokeWidth="1.500" /></>),
  kb: (<><rect x="0" y="3" width="24" height="18" rx="2" fill="#2f74b8" /><path d="M3 7h18M3 12h18M3 17h2M19 17h2" stroke="#fff" strokeWidth="2" strokeDasharray="2 2" /><path d="M7 17h10" stroke="#fff" strokeWidth="2" /></>),
  moon: <path d="M16 3q9 9 0 16-8 5-15-2Q15 17 16 3z" fill="#2f74b8" />,
  punct: (<g fill="#2f74b8"><circle cx="5" cy="8" r="3" fill="none" stroke="#2f74b8" strokeWidth="2" /><path d="M14 12h6q1 6-5 10l-1-1q3-2 2-5h-2z" /></g>),
  user: (<g fill="#c2c6ca"><circle cx="9" cy="6" r="5" /><path d="M1 21q0-9 8-9t7 4v5z" /><rect x="10" y="13" width="13" height="9" fill="#f3f3f3" stroke="#c2c6ca" /><path d="M13 15v5M17 15h3v5h-3zM17 17.500h3" stroke="#c2c6ca" fill="none" /></g>),
  shirt: <path d="M7 3q5 4 10 0l6 4-3 5-2-1v11H6V11l-2 1-3-5z" fill="#2f74b8" />,
};

const Svg = styled.svg`
  display: block;
  flex: none;
  overflow: hidden;
`;
const Icon = ({ name, size = 23 }: { name: string; size?: number }) => (
  <Svg width={size} height={size} viewBox="0 0 24 24" aria-hidden="true">{icons[name]}</Svg>
);

/* ---------- shared controls ---------- */

const ToolButton = styled.button<{ $w?: number; $h?: number; $on?: boolean }>`
  flex: none;
  width: ${(p) => p.$w ?? 31}px;
  height: ${(p) => p.$h ?? 31}px;
  display: flex;
  align-items: center;
  justify-content: center;
  ${(p) => p.$on && css`background: #c8dad6; border: 1px solid #a9bdb8;`}
`;
const caretShape = css`
  content: "";
  border: 3px solid transparent;
  border-top: 4px solid #222;
  border-bottom: 0;
`;
const CaretButton = styled.button<{ $low?: boolean }>`
  flex: none;
  width: 12px;
  height: 24px;
  display: flex;
  justify-content: center;
  align-items: ${(p) => (p.$low ? "flex-end" : "center")};
  &::after { ${caretShape} }
`;
const Sep = styled.span`
  flex: none;
  width: 1px;
  height: 32px;
  margin: 0 3px 0 2px;
  background: #dedede;
`;
const Grip = styled.span<{ $ml?: number }>`
  flex: none;
  width: 3px;
  height: 30px;
  margin-left: ${(p) => p.$ml ?? 0}px;
  background: repeating-linear-gradient(#aaa 0 2px, transparent 2px 4px);
`;

/* ---------- frame ---------- */

const Frame = styled.div`
  height: 100vh;
  display: flex;
  flex-direction: column;
  padding: 20px 0 1px;
  background: #000;
`;
const TitleBar = styled.header`
  flex: none;
  height: 30px;
  display: flex;
  align-items: center;
  background: #fff;
  overflow: hidden;
`;
const Logo = styled.span`
  padding: 0 5px 0 4px;
  margin-right: 5px;
  border-right: 1px solid #ddd;
  color: #8295a0;
  font-size: 21px;
  line-height: 28px;
  font-weight: 700;
`;
const Title = styled.h1`
  flex: 1;
  margin: 0;
  font-size: 12px;
  font-weight: 400;
  color: #111;
  text-spacing-trim: space-all;
  white-space: pre;
`;
const Siemens = styled.span`
  margin-right: 24px;
  font-size: 14px;
  font-weight: 700;
  color: #1c9a86;
`;
const WindowButtons = styled.div`
  flex: none;
  width: 37px;
  display: flex;
  align-items: center;
  gap: 8px;
  overflow: hidden;
`;
const MinButton = styled.button`
  flex: none;
  width: 18px;
  height: 18px;
  display: flex;
  align-items: flex-end;
  justify-content: center;
  padding-bottom: 4px;
  &::after { content: ""; width: 8px; height: 2px; background: #222; }
`;
const MenuBar = styled.nav`
  flex: none;
  height: 31px;
  display: flex;
  align-items: center;
  background: #c8dad6;
  overflow: hidden;
`;
const MenuList = styled.div`
  flex: 1;
  display: flex;
  align-items: center;
  gap: 14px;
  padding: 0 0 4px 3px;
`;
const MenuItem = styled.button<{ $gap?: number }>`
  font-size: 15px;
  line-height: 24px;
  margin-left: ${(p) => p.$gap ?? 0}px;
  white-space: nowrap;
`;
const ToolBar = styled.div<{ $h: number; $pl?: number }>`
  flex: none;
  height: ${(p) => p.$h}px;
  padding-left: ${(p) => p.$pl ?? 0}px;
  display: flex;
  align-items: center;
  background: #fff;
`;
const BarGroup = styled.div`
  height: 100%;
  display: flex;
  align-items: center;
  border-bottom: 1px solid #dcdcdc;
  border-right: 1px solid #e4e4e4;
`;
const StartButton = styled.button`
  display: flex;
  align-items: center;
  gap: 4px;
  padding-left: 4px;
  font-size: 15px;
`;
const SearchBox = styled.label`
  width: 172px;
  height: 25px;
  margin: 0 3px 0 5px;
  padding-right: 3px;
  display: flex;
  align-items: center;
  border: 1px solid #ababab;
  background: #fff;
`;
const SearchInput = styled.input`
  flex: 1;
  min-width: 0;
  height: 22px;
  padding: 0 1px;
  border: 0;
  outline: 0;
  background: transparent;
  font-size: 15px;
`;
const ComboBox = styled.span<{ $w: number; $mr: number }>`
  width: ${(p) => p.$w}px;
  margin-right: ${(p) => p.$mr}px;
  display: grid;
  align-items: center;
  &::after {
    ${caretShape}
    grid-area: 1 / 1;
    justify-self: end;
    margin-right: 6px;
  }
`;
const Combo = styled.select`
  grid-area: 1 / 1;
  width: 100%;
  height: 24px;
  padding: 0 2px;
  appearance: none;
  border: 1px solid #ababab;
  border-radius: 0;
  font-size: 15px;
  background: #fff;
`;
const CueLine = styled.div`
  flex: none;
  height: 24px;
  display: grid;
  grid-template-columns: 1fr auto 1fr;
  align-items: center;
  border-top: 2px solid #8f8f8f;
  background: #fff;
`;
const CueText = styled.span`
  padding: 0 4px 4px 0;
  font-size: 15px;
  font-weight: 500;
  line-height: 18px;
`;
const CueEnd = styled.div`
  display: flex;
  justify-content: flex-end;
  padding: 0 5px 2px 0;
`;

/* ---------- body ---------- */

const Body = styled.main`
  flex: 1;
  min-height: 0;
  display: flex;
`;
const ResourceBar = styled.nav`
  flex: none;
  width: 32px;
  display: flex;
  flex-direction: column;
  background: #d9d9d9;
  border-right: 1px solid #a9a9a9;
`;
const ResourceTab = styled.button<{ $h?: number; $mt?: number; $mb?: number; $on?: boolean }>`
  flex: none;
  height: ${(p) => p.$h ?? 42}px;
  margin: ${(p) => p.$mt ?? 0}px 0 ${(p) => p.$mb ?? 0}px;
  display: flex;
  align-items: center;
  padding-left: 6px;
  ${(p) => p.$on && css`
    margin: 0 -1px 0 2px;
    padding-left: 4px;
    background: #fff;
    border: 1px solid #a9a9a9;
    border-right: 0;
  `}
`;
const Navigator = styled.section`
  flex: none;
  width: 210px;
  display: flex;
  flex-direction: column;
  padding: 0 9px 7px 6px;
  background: #fff;
`;
const NavTitle = styled.div`
  flex: none;
  height: 28px;
  display: flex;
  align-items: center;
  justify-content: space-between;
  padding: 0 7px 0 4px;
  font-size: 12px;
`;
const FloatButton = styled.button`
  width: 12px;
  height: 10px;
  border: 1px solid #111;
  border-top-width: 2px;
`;
const TreeBox = styled.div`
  flex: 1;
  min-height: 0;
  display: flex;
  flex-direction: column;
  border: 1px solid #a5a5a5;
`;
const TreeHead = styled.div`
  flex: none;
  height: 22px;
  padding-left: 7px;
  line-height: 22px;
  background: #f0f0f0;
  border-bottom: 1px solid #dcdcdc;
`;
const TreeArea = styled.div`
  flex: 1;
  min-height: 0;
  display: flex;
`;
const Tree = styled.ul`
  flex: 1;
  min-width: 0;
  margin: 0;
  padding: 0 0 0 1px;
  list-style: none;
  overflow: hidden;
`;
const Row = styled.li`
  height: 20px;
  display: flex;
  align-items: center;
  border-bottom: 1px solid #ebebeb;
`;
const Guide = styled.span<{ $v?: "full" | "top" | "bottom"; $h?: boolean }>`
  flex: none;
  width: 19px;
  height: 20px;
  display: flex;
  align-items: center;
  justify-content: center;
  background:
    ${(p) => (p.$v
      ? `repeating-linear-gradient(#999 0 1px, transparent 1px 2px) 9px ${p.$v === "bottom" ? "100%" : "0"} / 1px ${p.$v === "full" ? "100%" : "50%"} no-repeat`
      : "none")},
    ${(p) => (p.$h ? "repeating-linear-gradient(90deg, #999 0 1px, transparent 1px 2px) 10px 10px / 8px 1px no-repeat" : "none")};
`;
const Toggle = styled.button`
  width: 9px;
  height: 9px;
  display: flex;
  align-items: center;
  justify-content: center;
  border: 1px solid #c4c4c4;
  background: #fff;
  &::after { content: ""; width: 5px; height: 1px; background: #222; }
`;
const Slot = styled.span`
  flex: none;
  width: 16px;
  display: flex;
  justify-content: center;
`;
const Label = styled.span<{ $tone?: "purple" | "selected" }>`
  flex: 1;
  min-width: 0;
  height: 19px;
  line-height: 19px;
  padding-left: 3px;
  overflow: hidden;
  white-space: nowrap;
  ${(p) => p.$tone === "purple" && css`color: #6440b0;`}
  ${(p) => p.$tone === "selected" && css`color: #fff; background: #3a94ec;`}
`;
const VScroll = styled.div`
  flex: none;
  width: 17px;
  display: flex;
  flex-direction: column;
  padding-right: 2px;
  background: #f0f0f0;
`;
const HScroll = styled.div`
  flex: none;
  height: 16px;
  display: flex;
  background: #f0f0f0;
`;
const ScrollArrow = styled.button`
  flex: none;
  width: 16px;
  height: 18px;
  display: flex;
  align-items: center;
  justify-content: center;
`;
const VThumb = styled.span`
  height: 61%;
  background: #cdcdcd;
`;
const Spring = styled.span`
  flex: 1;
`;
const HThumb = styled.span`
  width: 23px;
  height: 15px;
  margin-left: 2px;
  background: #cdcdcd;
`;
const Foot = styled.div`
  flex: none;
  height: 5px;
  margin-top: 2px;
  background: #dedede;
  border-top: 1px solid #a5a5a5;
`;
const Column = styled.div<{ $w: number; $pt: number; $line?: boolean }>`
  flex: none;
  width: ${(p) => p.$w}px;
  padding-top: ${(p) => p.$pt}px;
  background: #fff;
  ${(p) => p.$line && css`border-left: 1px solid #888;`}
`;
const ColumnGroup = styled.div<{ $mt?: number }>`
  margin-top: ${(p) => p.$mt ?? 0}px;
  display: flex;
  flex-direction: column;
  align-items: center;
  border-bottom: 1px solid #d4d4d4;
  border-right: 1px solid #d4d4d4;
`;
const HGrip = styled.span`
  align-self: stretch;
  height: 3px;
  margin: 3px 3px 2px;
  background: repeating-linear-gradient(90deg, #aaa 0 2px, transparent 2px 4px);
`;
const LineRow = styled.div`
  display: flex;
  align-items: center;
`;
const HRule = styled.span`
  align-self: stretch;
  height: 1px;
  margin: 1px 2px 2px;
  background: #ccc;
`;
const More = styled.button`
  align-self: flex-start;
  height: 13px;
  width: 20px;
  display: flex;
  align-items: center;
  justify-content: center;
  &::after {
    content: "";
    border: 3px solid transparent;
    border-right: 4px solid #111;
    border-left: 0;
  }
`;
const Viewport = styled.section`
  flex: 1;
  min-width: 0;
  position: relative;
  background: #000;
  overflow: hidden;
`;
const Placed = styled.div<{ $x: number; $y: number }>`
  position: absolute;
  left: ${(p) => p.$x}px;
  top: ${(p) => p.$y}px;
`;
const Ime = styled.div`
  position: absolute;
  right: 0;
  top: 522px;
  display: flex;
  align-items: center;
  height: 28px;
`;
const ImeTray = styled.div`
  display: flex;
  align-items: center;
  gap: 5px;
  height: 24px;
  width: 135px;
  padding-left: 5px;
  background: #fbfcfd;
  color: #2f74b8;
  overflow: hidden;
`;
const ImeButton = styled.button`
  flex: none;
  width: 17px;
  display: flex;
  justify-content: center;
  font-size: 15px;
  line-height: 20px;
  font-weight: 700;
`;
const BottomBar = styled.footer`
  flex: none;
  height: 34px;
  display: flex;
  align-items: center;
  padding-left: 214px;
  background: #fff;
`;
const BottomTools = styled(BarGroup)`
  padding-left: 2px;
`;

const Tool = ({ n, size, w, h, on }: { n: string; size?: number; w?: number; h?: number; on?: boolean }) => (
  <ToolButton $w={w} $h={h} $on={on} aria-label={n}><Icon name={n} size={size} /></ToolButton>
);
/* "|" separator, "v" drop-down arrow, "." overflow arrow, ":" grip */
const Tools = ({ items, w, size }: { items: string[]; w?: number; size?: number }) => (
  <>
    {items.map((n, i) => {
      if (n === "|") return <Sep key={i} />;
      if (n === ":") return <Grip key={i} />;
      if (n === "v" || n === ".") return <CaretButton key={i} $low={n === "."} aria-label="more" />;
      return <Tool key={i} n={n} w={w} size={size} />;
    })}
  </>
);

/* ---------- tree data ---------- */

type Leaf = ["face" | "cavity" | "zlevel", ("purple" | "selected")?];
const names = { face: "FACE_MILL", cavity: "CAVITY_MI", zlevel: "ZLEVEL_PRO" };
const programs: [string, Leaf[]][] = [
  ["_MODEL7501", [["face", "selected"]]],
  ["_MODEL7502", [["cavity"]]],
  ["_MODEL7503", [["cavity", "purple"]]],
  ["_MODEL7504", [["cavity", "purple"]]],
  ["_MODEL7505", [["face", "purple"], ["face"], ["face"]]],
  ["_MODEL7506", [["face"], ["face"], ["face"]]],
  ["_MODEL7507", [["face", "purple"], ["zlevel"], ["zlevel"], ["zlevel"]]],
  ["_MODEL7508", [["face", "purple"], ["face"], ["face"], ["face"], ["zlevel"], ["zlevel"], ["zlevel"], ["zlevel"], ["zlevel"]]],
  ["_MODEL7509", [["face", "purple"], ["face"], ["face"], ["face"]]],
];
const Branch = ({ depth, name, v = "full" }: { depth: number; name: string; v?: "full" | "top" }) => (
  <Row>
    {Array.from({ length: depth }, (_, i) => <Guide key={i} />)}
    <Guide $v={v} $h><Toggle aria-label={`collapse ${name}`} /></Guide>
    <Slot><Icon name="bang" size={16} /></Slot>
    <Slot><Icon name="folder" size={15} /></Slot>
    <Label>{name}</Label>
  </Row>
);
const Chevron = ({ d }: { d: string }) => (
  <Svg width="9" height="9" viewBox="0 0 9 9"><path d={d} fill="none" stroke="#444" strokeWidth="2" /></Svg>
);

/* ---------- model ---------- */

const Model = () => (
  <Svg width="500" height="310" viewBox="0 0 1500 930" role="img" aria-label="model">
    <g strokeLinejoin="round" strokeLinecap="round">
      <path d="M350 72L1240 63l20 42 145-2 37 249-164 516L75 882 48 718l22-78-2-45 77-245-12-88 27-94 20-3 18-50 130 1z" fill="#f46264" />
      <path d="M1405 105l37 247-164 516-28-158 30-120 30-140-10-95 60-165z" fill="#b04143" />
      <path d="M50 720l145-2 12-38 885-8 18 38 140 0 28 158L75 882z" fill="#6b2629" />
      <path d="M143 265l227 20 5 72-225-12zM1115 368l187-3 8 80-188-8zM575 500l265-2 40 79-410 3-5-55 110 0zM78 600l120 4 8 28-128 0zM1160 592l112-2 4 30-112 2z" fill="#6b2629" />
      <path d="M385 262l82-40 14 98-92 34zM840 302l150-90 14 80-158 72z" fill="#96393d" />
      <path d="M476 214l32-6 22 106-42 6zM1002 206l32 2 12 90-34-10zM1040 215l48 46-6 62-34-26z" fill="#702a2d" />
      <path d="M868 505l100-55 2 85-56 40-34 2zM410 545l50-20 6 55-30-4zM1112 600l40-12 8 36-40 10z" fill="#7c3034" />
      <path d="M375 395l210-5 24 10-34 90-30 0-90 35-70 25-50-50z" fill="#c04b50" />
      <path d="M465 462l70-12 26 40-80 24zM400 360l76-32 40 28-90 20zM895 455l60-5-40 30zM860 385l145-65 70 50-10 15-130 15z" fill="#f46264" />
      <path d="M1240 75l-20 58 24 50 10-30-12-18 14-34z" fill="#b04347" />
      <g fill="none" stroke="#c44a50" strokeWidth="10">
        <path d="M350 72L1240 63l20 42 145-2 37 249-164 516L75 882 48 718l22-78-2-45 77-245-12-88 27-94 20-3 18-50 130 1z" />
        <path d="M50 720l145-2 12-38 885-8 18 38 140 0 28 158M1250 710l30-120 30-140-10-95 60-165" />
        <path d="M345 85l-22 70-150 12 2 30 130-4 20-36M1240 70l-20 64 22 54 123-2 8-32-115 0-16-12" />
        <path d="M143 265l227 20 5 72-225-12M150 350l90 8 135 6M375 265l92-52 48-6 70 90M375 265l12 96M467 220l16 100M510 208l22 110" />
        <path d="M600 358h215M1105 354h335M120 445l250-8M68 590l130 0 22 14-14 76M75 635l130-2M190 600l6 30" />
        <path d="M840 298l150-90 50-3 52 48 24 190M990 210l14 82 46 6 60 74M1034 208l14 90M850 362l156-72M840 298l12 70" />
        <path d="M822 375q-20 40 8 80l50 45 100 45 90-40 10-60 10-120M1115 365l187 0M1125 438l185 8M860 398l80 4 30-14 110 2M840 430l90 8 170 6M1100 440l100 6-45 36-60-6" />
        <path d="M830 440l-85 55 10 26 85 0 10-28M745 495l-170 2 4 26-90 0M470 580l410-3 36-10 55-34M865 500l20 76M460 525l6 55M410 548l50 34" />
        <path d="M335 470l-80-5 2 25 80 0M255 450l90-10M338 510l50 38 90-22 100-40 30-80-15-80M400 400l80-8 110 6M370 390l-30 100M440 455l60 70M430 380l60-50M1278 580l-140 4-30 40-16 48M1150 590l10 34 115-2M1050 540l80 44M1068 512l144 60M1075 495l-40 40M1005 320l-140 64M1050 325l-40-10M1060 330l20 60" />
      </g>
      <g fill="none" stroke="#c44a50" strokeWidth="6">
        <path d="M75 878L240 355 200 118M580 375l-25 110M320 462l45-35M870 410l40 70M930 455l-40 38M1040 310l60 60M880 470l60-20" />
      </g>
      <g fill="#b84449"><ellipse cx="1043" cy="372" rx="28" ry="16" /><ellipse cx="998" cy="502" rx="30" ry="18" /><ellipse cx="838" cy="430" rx="24" ry="18" /><ellipse cx="448" cy="375" rx="26" ry="16" /><ellipse cx="410" cy="505" rx="30" ry="22" /><ellipse cx="525" cy="425" rx="34" ry="20" /><path d="M810 365h42v36h-42z" /></g>
      <g fill="none" strokeLinecap="butt">
        <path d="M356 402l12 12M372 418l2 34M376 478l-4 46M392 462l18 26" stroke="#5b4742" strokeWidth="9" />
        <path d="M416 408l-22 32M386 408l-8 22M378 490l0 34" stroke="#a08f85" strokeWidth="8" />
      </g>
      <path d="M490 415l5 25M505 412l10 22M545 415l8 22" stroke="#f46264" strokeWidth="6" />
    </g>
    <path d="M200 110l40 245" stroke="#5a74c8" strokeWidth="4" /><path d="M197 140l5-28 8 28z" fill="#2a4fe0" />
    <g fontFamily="Noto Sans, sans-serif" fontSize="38">
      <text x="206" y="99" fill="#2247e8">ZM</text>
      <text x="240" y="182" fill="#b5703f">YM</text>
      <text x="228" y="219" fill="#9c38b4">ZC</text>
      <text x="220" y="264" fill="#a8803f">YC</text>
    </g>
    <path d="M243 350l10-50 12-24 14-44 8-32 9 32-16 46-9 34z" fill="#a9e8a4" /><circle cx="284" cy="222" r="10" fill="#3c8555" /><circle cx="261" cy="293" r="9" fill="#3c8555" />
    <circle cx="574" cy="307" r="87" fill="#ff3cae" opacity=".55" />
    <path d="M489 300q4-42 30-62l8-10 72 74-20 46-46-44z" fill="#7a1fd6" opacity=".85" /><path d="M500 222l14-8 14 80-22 8z" fill="#8a2aa0" opacity=".7" />
    <path d="M500 320l20 25 5-25 20 40M575 350l30 10" stroke="#b02ad0" strokeWidth="5" fill="none" />
    <path d="M340 356h60M480 356h40" stroke="#f3c9bf" strokeWidth="3" />
    <g fill="none">
      <g stroke="#111" strokeWidth="8"><circle cx="574" cy="307" r="43" strokeDasharray="54 14" strokeDashoffset="-7" /><path d="M528 307h92M574 262v90" strokeWidth="11" /></g>
      <circle cx="574" cy="307" r="43" stroke="#fff" strokeWidth="3" strokeDasharray="54 14" strokeDashoffset="-7" />
      <path d="M530 307h88M574 264v86" stroke="#fff" strokeWidth="4" />
    </g>
  </Svg>
);
const Triad = () => (
  <Svg width="120" height="90" viewBox="0 0 360 270" role="img" aria-label="triad">
    <path d="M92 87h82l11 70-12 40H88l-4-80z" fill="#a2a2a2" /><path d="M92 87l32 48h60M124 135l-5 60M84 155h100M174 87l-12 68 10 42" fill="none" stroke="#b8b8b8" strokeWidth="3" />
    <path d="M92 195l20-80 8 3-15 77z" fill="#a6d6a0" />
    <path d="M82 200l-6-78-10 2 8-38 14 34-6 2 8 78z" fill="#1c30d8" />
    <path d="M92 198h96v-8l36 11-36 10v-6H92z" fill="#c8283a" />
    <circle cx="89" cy="203" r="13" fill="#e4e4e4" />
    <g fontFamily="Noto Sans, sans-serif" fontSize="36"><text x="58" y="89" fill="#2247e8">Z</text><text x="227" y="214" fill="#cc2a3a">X</text></g>
  </Svg>
);

const menus: [string, string, number?][] = [
  ["文件", "F", -11], ["编辑", "E"], ["视图", "V"], ["插入", "S"], ["格式", "R"], ["工具", "T"], ["装配", "A"], ["信息", "I"], ["分析", "L"], ["首选项", "P", 11], ["窗口", "O"],
  ["GC工具箱", ""], ["星空外挂 V6.935F", ""], ["帮助", "H"],
];
const resources: { n: string; h?: number; mt?: number; mb?: number; s?: number }[] = [
  { n: "gear", h: 27, mb: 15 }, { n: "asm" }, { n: "constraint" }, { n: "part" }, { n: "opNav" }, { n: "mfg" }, { n: "machine" }, { n: "books" },
  { n: "info", mt: 12, mb: 12 }, { n: "page" }, { n: "clock", mt: 12 }, { n: "spectrum" }, { n: "toolWiz" }, { n: "wrench" }, { n: "panelA" }, { n: "panelB" }, { n: "roles" },
];

export default function App() {
  return (
    <Frame>
      <GlobalStyle />
      <TitleBar>
        <Logo>NX</Logo>
        <Title>勤奋是取得成功的关键 - 加工 - [_model75.prt （修改的） ]</Title>
        <Siemens>SIEMENS</Siemens>
        <WindowButtons>
          <MinButton aria-label="minimize" />
          <ToolButton $w={18} $h={18} aria-label="restore"><Icon name="restore" size={18} /></ToolButton>
        </WindowButtons>
      </TitleBar>
      <MenuBar>
        <Grip $ml={3} />
        <MenuList>
          <Icon name="menuMill" size={17} />
          {menus.map(([t, k, g]) => (
            <MenuItem key={t} $gap={g}>{t}{k && <>(<u>{k}</u>)</>}</MenuItem>
          ))}
        </MenuList>
        <WindowButtons>
          <MinButton aria-label="minimize window" />
          <ToolButton $w={18} $h={18} aria-label="restore window"><Icon name="restore" size={18} /></ToolButton>
        </WindowButtons>
      </MenuBar>
      <ToolBar $h={36}>
        <BarGroup>
          <Grip $ml={4} />
          <StartButton><Icon name="start" size={24} />启动</StartButton>
          <Tools items={["v", "newDoc", "open", "save", "print", "|", "cut", "copy", "paste", "del", "|", "undo", "v", "|", "post", "v", "|", "infoObj", "|"]} />
          <SearchBox aria-label="查找命令">
            <SearchInput defaultValue="查找命令" />
            <Icon name="search" size={16} />
          </SearchBox>
          <Tools items={[".", "|", ":", "fit", "v", "orient", "v", "cube", "v", "clipEdit", "clipPlane", "v", "bg", "v", "|", "section", "section2", ".", "|", ":", "layers", "wcs", "v", "|", "showHide", "palette", "|", "replay", "v", "|", "measure", "v", "ruler", "."]} />
        </BarGroup>
      </ToolBar>
      <ToolBar $h={35} $pl={5}>
        <ComboBox $w={178} $mr={7}><Combo aria-label="过滤器"><option>无选择过滤器</option></Combo></ComboBox>
        <ComboBox $w={188} $mr={5}><Combo aria-label="范围"><option>整个装配</option></Combo></ComboBox>
        <Tools w={22} size={17} items={["f1", "|", "f2", "f3", "v", "f4", "f5", "|", "hexDot", "marquee", "v", "|"]} />
        <Tool n="shadeA" w={23} h={23} size={18} on />
        <Tool n="shadeB" w={23} h={23} size={18} on />
        <Tool n="shadeC" w={22} size={17} />
      </ToolBar>
      <CueLine>
        <span />
        <CueText>体(1)</CueText>
        <CueEnd><ToolButton $w={18} $h={18} aria-label="full screen"><Icon name="fullScreen" size={17} /></ToolButton></CueEnd>
      </CueLine>
      <Body>
        <ResourceBar>
          {resources.map(({ n, h, mt, mb }) => (
            <ResourceTab key={n} $h={h} $mt={mt} $mb={mb} $on={n === "opNav"} aria-label={n}><Icon name={n} size={n === "gear" ? 18 : 23} /></ResourceTab>
          ))}
        </ResourceBar>
        <Navigator>
          <NavTitle>工序导航器 - 程序顺序<FloatButton aria-label="float" /></NavTitle>
          <TreeBox>
            <TreeHead>名称</TreeHead>
            <TreeArea>
              <Tree>
                <Row><Label>NC_PROGRAM</Label></Row>
                <Row><Guide $v="bottom" $h /><Slot><Icon name="folder" size={15} /></Slot><Label>未用项</Label></Row>
                <Branch depth={0} name="PROGRAM" v="top" />
                <Branch depth={1} name="TOP" v="top" />
                {programs.map(([name, leaves]) => (
                  <React.Fragment key={name}>
                    <Branch depth={2} name={name} />
                    {leaves.map(([kind, tone], i) => (
                      <Row key={i}>
                        <Guide /><Guide /><Guide $v="full" />
                        <Guide $v={i === leaves.length - 1 ? "top" : "full"} $h />
                        <Slot><Icon name={tone === "selected" ? "tick" : "bang"} size={tone === "selected" ? 13 : 16} /></Slot>
                        <Slot><Icon name={kind} size={16} /></Slot>
                        <Label $tone={tone}>{names[kind]}</Label>
                      </Row>
                    ))}
                  </React.Fragment>
                ))}
              </Tree>
              <VScroll>
                <ScrollArrow aria-label="up"><Chevron d="M1 6l3.500-4L8 6" /></ScrollArrow>
                <VThumb />
                <Spring />
                <ScrollArrow aria-label="down"><Chevron d="M1 3l3.500 4L8 3" /></ScrollArrow>
              </VScroll>
            </TreeArea>
            <HScroll>
              <ScrollArrow aria-label="left"><Chevron d="M6 1L2 4.500 6 8" /></ScrollArrow>
              <HThumb />
              <Spring />
              <ScrollArrow aria-label="right"><Chevron d="M3 1l4 3.500L3 8" /></ScrollArrow>
              <ScrollArrow as="span" />
            </HScroll>
            <Foot />
          </TreeBox>
        </Navigator>
        <Column $w={47} $pt={3} $line>
          <ColumnGroup>
            <HGrip />
            {["trim", "corner", "bridge", "extend"].map((n) => <Tool key={n} n={n} />)}
            <More aria-label="more curve tools" />
          </ColumnGroup>
          <ColumnGroup>
            <HGrip />
            <LineRow><Tool n="line" /><CaretButton aria-label="line options" /></LineRow>
            {["line", "arc", "rect", "spline"].map((n) => <Tool key={n} n={n} />)}
            <ToolButton aria-label="text">
              <Svg width="22" height="22" viewBox="0 0 22 22"><text x="11" y="19" textAnchor="middle" fontFamily="Liberation Serif, serif" fontWeight="700" fontSize="25" fill="#3a3a3a">A</text></Svg>
            </ToolButton>
            {["offset", "surfCurve", "project", "combine", "surfLine", "surfInt", "uv", "mirror", "extrude"].map((n) => <Tool key={n} n={n} />)}
            <More aria-label="more shape tools" />
          </ColumnGroup>
        </Column>
        <Column $w={34} $pt={7}>
          <ColumnGroup>
            <HGrip />
            {["createProg", "verifyProg", "expandAll", "collapseAll"].map((n) => <Tool key={n} n={n} />)}
            <More aria-label="more program tools" />
          </ColumnGroup>
          <ColumnGroup>
            <HGrip />
            {["opCopy", "opPaste", "opMove"].map((n) => <Tool key={n} n={n} />)}
            <More aria-label="more operation tools" />
          </ColumnGroup>
          <ColumnGroup $mt={14}>
            <HGrip />
            {["opShow", "genPath", "replayPath", "verify3d", "verifyCut"].map((n) => <Tool key={n} n={n} />)}
            <HRule />
            <Tool n="post" />
            <More aria-label="more path tools" />
          </ColumnGroup>
        </Column>
        <Viewport>
          <Placed $x={297} $y={284}><Model /></Placed>
          <Placed $x={37} $y={714}><Triad /></Placed>
          <Ime>
            <Svg width="28" height="28" viewBox="0 0 28 28">
              <path d="M1 5L22 1q2 0 2 2l3 20-2 2-20 3q-2 0-2-2L0 7z" fill="#e0482b" />
              <path d="M20 8q-11-3-13 1t7 5 6 5-13 2" fill="none" stroke="#fff" strokeWidth="4" />
            </Svg>
            <ImeTray>
              <ImeButton>中</ImeButton>
              {["moon", "punct", "kb", "user", "shirt"].map((n) => <ImeButton key={n} aria-label={n}><Icon name={n} size={16} /></ImeButton>)}
            </ImeTray>
          </Ime>
        </Viewport>
      </Body>
      <BottomBar>
        <Grip />
        <BottomTools>
          <Tools items={["abs", "xdim", "stack", "left", "right", "diamondArrows", "blocks", "pad", "cubeRuler", "cubeWire", "radius", "wirePocket", "patch", "stripes", "infoCube", "cyls", "redCube", "pinkPlane", "splitH", "splitV", "rect2", "v", "hex", "v", "csys", "target", "ring", "text3d", "cubeDash", "light", "circle", "."]} />
        </BottomTools>
      </BottomBar>
    </Frame>
  );
}
